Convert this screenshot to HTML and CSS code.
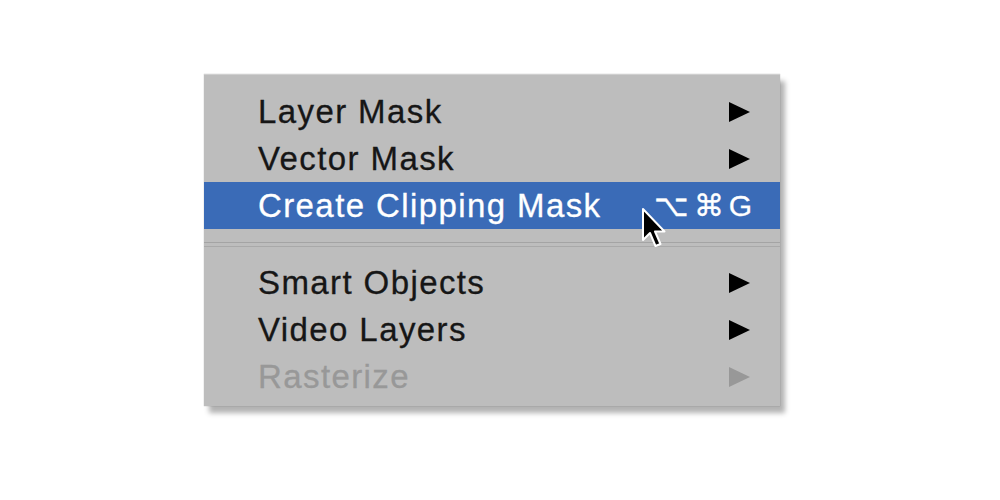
FILE: index.html
```html
<!DOCTYPE html>
<html lang="en">
<head>
    <meta charset="UTF-8">
    <title>Layer menu</title>
    <link rel="stylesheet" href="styles.css">
</head>
<body>
    <div class="stage">
        <div class="menu">
            <div class="menu-item">
                <span class="label">Layer Mask</span>
                <span class="arrow"></span>
            </div>
            <div class="menu-item">
                <span class="label">Vector Mask</span>
                <span class="arrow"></span>
            </div>
            <div class="menu-item active">
                <span class="label">Create Clipping Mask</span>
                <span class="shortcut">⌥⌘G</span>
                <svg class="cursor" width="26" height="44" viewBox="0 0 26 44">
                    <path d="M2 2 L2 33 L9 26 L14.5 39 L19.5 37 L14 24.5 L23.5 24.5 Z" fill="#000" stroke="#fff" stroke-width="2" stroke-linejoin="round"/>
                </svg>
            </div>
            <div class="separator"></div>
            <div class="menu-item">
                <span class="label">Smart Objects</span>
                <span class="arrow"></span>
            </div>
            <div class="menu-item">
                <span class="label">Video Layers</span>
                <span class="arrow"></span>
            </div>
            <div class="menu-item disabled">
                <span class="label">Rasterize</span>
                <span class="arrow"></span>
            </div>
        </div>
    </div>
</body>
</html>
```

FILE: styles.css
```css
:root {
    --menu-bg: #bdbdbd;
    --highlight: #3a6bb7;
    --text: #161616;
    --disabled: #989898;
}

* {
    margin: 0;
    padding: 0;
    box-sizing: border-box;
}

body {
    background: #fff;
    font-family: 'Liberation Sans', Arial, sans-serif;
    width: 1000px;
    height: 500px;
    overflow: hidden;
}

.stage {
    padding: 74px 0 0 204px;
}

.menu {
    width: 576px;
    background: var(--menu-bg);
    padding: 13px 0 6px;
    border-top: 1px solid #cfcfcf;
    box-shadow: 5px 7px 5px rgba(0, 0, 0, 0.3), 0 0 1px rgba(0, 0, 0, 0.3);
}

.menu-item {
    position: relative;
    display: flex;
    align-items: center;
    height: 47px;
    padding: 0 30px 0 54px;
    font-size: 33px;
    color: var(--text);
}

.label {
    flex: 1;
    letter-spacing: 1.4px;
    -webkit-text-stroke: 0.3px currentColor;
}

.arrow {
    width: 0;
    height: 0;
    border-top: 10px solid transparent;
    border-bottom: 10px solid transparent;
    border-left: 21px solid #000;
}

.active {
    background: var(--highlight);
    color: #fff;
}

.shortcut {
    letter-spacing: 5px;
    font-size: 30px;
    margin-right: -7px;
    -webkit-text-stroke: 0.3px currentColor;
}

.cursor {
    position: absolute;
    left: 437px;
    top: 25px;
}

.disabled {
    color: var(--disabled);
}

.disabled .arrow {
    border-left-color: #989898;
}

.separator {
    height: 30px;
    display: flex;
    align-items: center;
}

.separator::before {
    content: "";
    width: 100%;
    height: 3px;
    border-top: 1px solid #a4a4a4;
    border-bottom: 1px solid #a9a9a9;
}
```
